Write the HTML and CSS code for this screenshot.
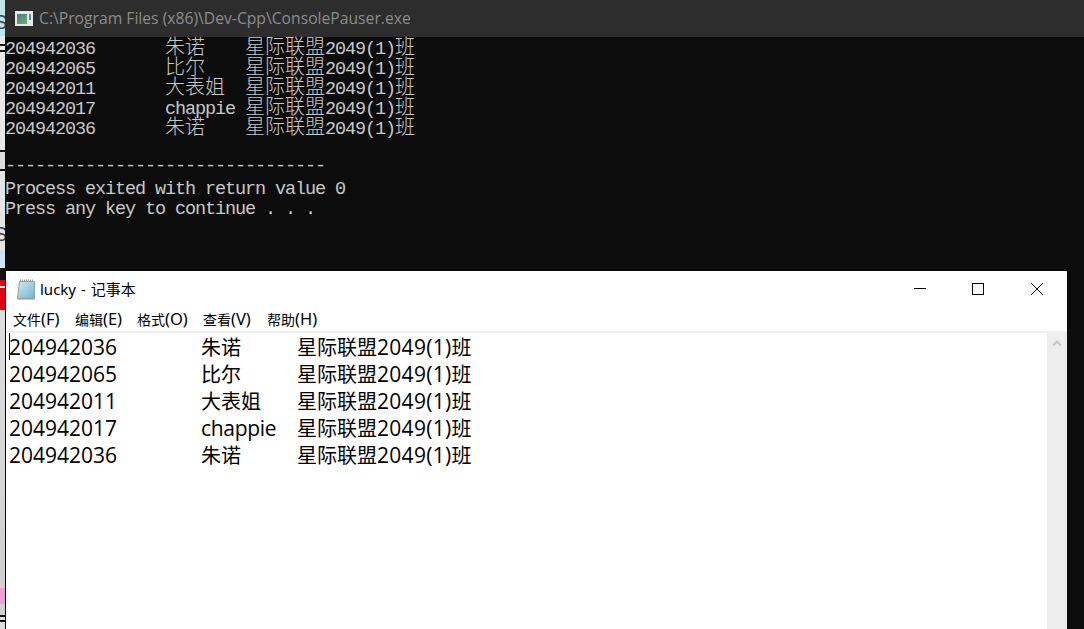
FILE: index.html
```html
<!DOCTYPE html>
<html lang="zh-CN">
<head>
<meta charset="utf-8">
<title>lucky - 记事本</title>
<link rel="stylesheet" href="styles.css">
</head>
<body>
<div class="strip"><span class="strip-s">S</span><span class="strip-s lower">S</span></div>
<main class="desktop">
  <section class="console">
    <header class="console-title">
      <svg class="console-icon" width="18" height="15" viewBox="0 0 18 15">
        <defs><linearGradient id="cg" x1="0" y1="0" x2="1" y2="1"><stop offset="0" stop-color="#3f7f8f"/><stop offset="1" stop-color="#6fb06f"/></linearGradient></defs>
        <rect width="18" height="15" fill="#e8e8e8"/>
        <rect x="2" y="3" width="10" height="10" fill="url(#cg)"/>
        <rect x="14" y="3" width="2" height="6" fill="#5a8f9f"/>
      </svg>
      <span>C:\Program Files (x86)\Dev-Cpp\ConsolePauser.exe</span>
    </header>
    <div class="console-body">
      <div class="crow"><span class="cid">204942036</span><span class="cname"><i>朱诺</i></span><span><i>星际联盟</i>2049(1)<i>班</i></span></div>
      <div class="crow"><span class="cid">204942065</span><span class="cname"><i>比尔</i></span><span><i>星际联盟</i>2049(1)<i>班</i></span></div>
      <div class="crow"><span class="cid">204942011</span><span class="cname"><i>大表姐</i></span><span><i>星际联盟</i>2049(1)<i>班</i></span></div>
      <div class="crow"><span class="cid">204942017</span><span class="cname">chappie</span><span><i>星际联盟</i>2049(1)<i>班</i></span></div>
      <div class="crow"><span class="cid">204942036</span><span class="cname"><i>朱诺</i></span><span><i>星际联盟</i>2049(1)<i>班</i></span></div>
      <div class="crow"></div>
      <div class="crow rule">--------------------------------</div>
      <div class="crow plain">Process exited with return value 0</div>
      <div class="crow plain">Press any key to continue . . .</div>
    </div>
  </section>
  <section class="notepad">
    <header class="np-title">
      <svg class="np-icon" width="20" height="21" viewBox="0 0 20 21">
        <defs><linearGradient id="ng" x1="0" y1="0" x2="1" y2="1"><stop offset="0" stop-color="#d5ecf4"/><stop offset="1" stop-color="#6fb3cf"/></linearGradient></defs>
        <path d="M3.5 2.5H18.5V19.5H1.5Z" fill="url(#ng)" stroke="#8fa3a8"/>
        <path d="M1.5 19.5H18.5V20.5H1.5Z" fill="#a89468"/>
        <path d="M4 1.5H18" stroke="#9a9a9a" stroke-width="2" stroke-dasharray="1 1"/>
      </svg>
      <span class="np-name">lucky - 记事本</span>
      <div class="win-btns">
        <svg width="12" height="12" viewBox="0 0 12 12"><path d="M0 5.5H12" stroke="#000"/></svg>
        <svg width="12" height="12" viewBox="0 0 12 12"><rect x=".5" y=".5" width="11" height="11" fill="none" stroke="#000"/></svg>
        <svg class="btn-close" width="12" height="12" viewBox="0 0 12 12"><path d="M0 0L12 12M12 0L0 12" stroke="#000"/></svg>
      </div>
    </header>
    <nav class="np-menu">
      <span><i>文件</i>(F)</span><span><i>编辑</i>(E)</span><span><i>格式</i>(O)</span><span><i>查看</i>(V)</span><span><i>帮助</i>(H)</span>
    </nav>
    <div class="np-content">
      <div class="np-text">
        <div class="nrow first"><span class="nid">204942036</span><span class="nname"><i>朱诺</i></span><span class="ncls"><i>星际联盟</i>2049(1)<i>班</i></span></div>
        <div class="nrow"><span class="nid">204942065</span><span class="nname"><i>比尔</i></span><span class="ncls"><i>星际联盟</i>2049(1)<i>班</i></span></div>
        <div class="nrow"><span class="nid">204942011</span><span class="nname"><i>大表姐</i></span><span class="ncls"><i>星际联盟</i>2049(1)<i>班</i></span></div>
        <div class="nrow"><span class="nid">204942017</span><span class="nname latin">chappie</span><span class="ncls"><i>星际联盟</i>2049(1)<i>班</i></span></div>
        <div class="nrow"><span class="nid">204942036</span><span class="nname"><i>朱诺</i></span><span class="ncls"><i>星际联盟</i>2049(1)<i>班</i></span></div>
      </div>
      <aside class="np-scroll">
        <svg width="10" height="6" viewBox="0 0 10 6"><path d="M1 5.5L5 1.5L9 5.5" fill="none" stroke="#c4c4c4" stroke-width="2"/></svg>
      </aside>
    </div>
  </section>
</main>
</body>
</html>
```
FILE: styles.css
```css
* { box-sizing: border-box; }
html, body { margin: 0; height: 100%; }
body {
  display: flex;
  width: 1084px;
  height: 629px;
  overflow: hidden;
  background: #0c0c0c;
}
i { font-style: normal; }

.strip {
  position: relative;
  flex: 0 0 5px;
  overflow: hidden;
  background: linear-gradient(to bottom,
    #bfe6ea 0, #bfe6ea 36px, #e8e8e8 36px, #e8e8e8 44px,
    #111 44px, #111 46px, #eee 46px, #eee 50px, #111 50px, #111 52px, #e8e8e8 52px,
    #e8e8e8 150px, #111 150px, #111 152px, #ddd 152px, #ddd 169px, #111 169px, #111 171px,
    #e4e4e4 171px, #e4e4e4 250px, #cfe4f4 250px, #cfe4f4 268px, #111 268px, #111 280px,
    #e00010 280px, #e00010 286px, #eee 286px, #eee 288px, #e00010 288px, #e00010 310px,
    #ddd 310px, #cfcfcf 588px, #f0a0d0 588px, #f0a0d0 604px, #cfcfcf 604px, #cfcfcf 615px,
    #111 615px, #111 617px, #ddd 617px, #ddd 620px, #111 620px, #111 622px, #ddd 622px);
}
.strip-s {
  position: absolute;
  top: 10px;
  left: -6px;
  font: 20px/24px "Liberation Sans", sans-serif;
  color: #444;
}
.strip-s.lower { top: 222px; }

.desktop {
  flex: 1;
  min-width: 0;
  display: flex;
  flex-direction: column;
}

.console { flex: 0 0 271px; }
.console-title {
  height: 37px;
  display: flex;
  align-items: center;
  gap: 6px;
  padding-left: 10px;
  background: #2d2d2d;
  color: #8c8c8c;
  font: 15.7px/37px "Open Sans", "Noto Sans", sans-serif;
  white-space: nowrap;
}
.console-icon { flex: none; }
.console-body {
  margin-top: -1px;
  color: #c8c8c8;
  font: 18.5px/20px "Liberation Mono", "Noto Sans CJK SC", monospace;
  letter-spacing: -1.1px;
}
.console-body i {
  font: 300 20px/20px "Noto Sans CJK SC", sans-serif;
  letter-spacing: 0;
}
.crow {
  height: 20px;
  display: flex;
  align-items: baseline;
  white-space: pre;
}
.crow.rule { padding-top: 1px; }
.crow.plain { padding-top: 4px; }
.cid { width: 160px; }
.cname { width: 80px; }

.notepad {
  flex: 1;
  min-height: 0;
  margin: 0 17px 0 1px;
  display: flex;
  flex-direction: column;
  background: #fff;
  color: #000;
}
.np-title {
  height: 36px;
  display: flex;
  align-items: center;
  padding-left: 10px;
  font: 15px/20px "Noto Sans", "Noto Sans CJK SC", sans-serif;
}
.np-icon { flex: none; margin-right: 4px; }
.np-name { flex: 1; word-spacing: 1px; }
.win-btns {
  display: flex;
  gap: 46px;
  padding-right: 24px;
}
.win-btns svg { display: block; }
.win-btns .btn-close { margin-left: 1px; }

.np-menu {
  height: 24px;
  display: flex;
  gap: 14px;
  align-items: center;
  padding-left: 7px;
  font: 16.5px/20px "Noto Sans", sans-serif;
  white-space: nowrap;
}
.np-menu i { font: 14px/20px "Noto Sans CJK SC", sans-serif; }
.np-menu span { width: 48px; }
.np-menu span:nth-child(3) { width: 52px; }
.np-menu span:nth-child(4) { width: 50px; }

.np-content {
  flex: 1;
  min-height: 0;
  display: flex;
  border-top: 2px solid #f0f0f0;
}
.np-text {
  flex: 1;
  padding: 0 0 0 3px;
  font: 21px/27px "Open Sans", "Noto Sans", sans-serif;
}
.np-text i { font: 20px/27px "Noto Sans CJK SC", sans-serif; letter-spacing: 0; }
.nrow { height: 27px; display: flex; align-items: baseline; white-space: pre; }
.first { box-shadow: inset 1px 0 0 #000; }
.nid { width: 192px; }
.nname { width: 96px; }
.nname.latin { letter-spacing: -.3px; }
.ncls { letter-spacing: .3px; }
.np-scroll {
  flex: 0 0 20px;
  background: #eeeeee;
  display: flex;
  justify-content: center;
  align-items: flex-start;
  padding-top: 7px;
}
```
